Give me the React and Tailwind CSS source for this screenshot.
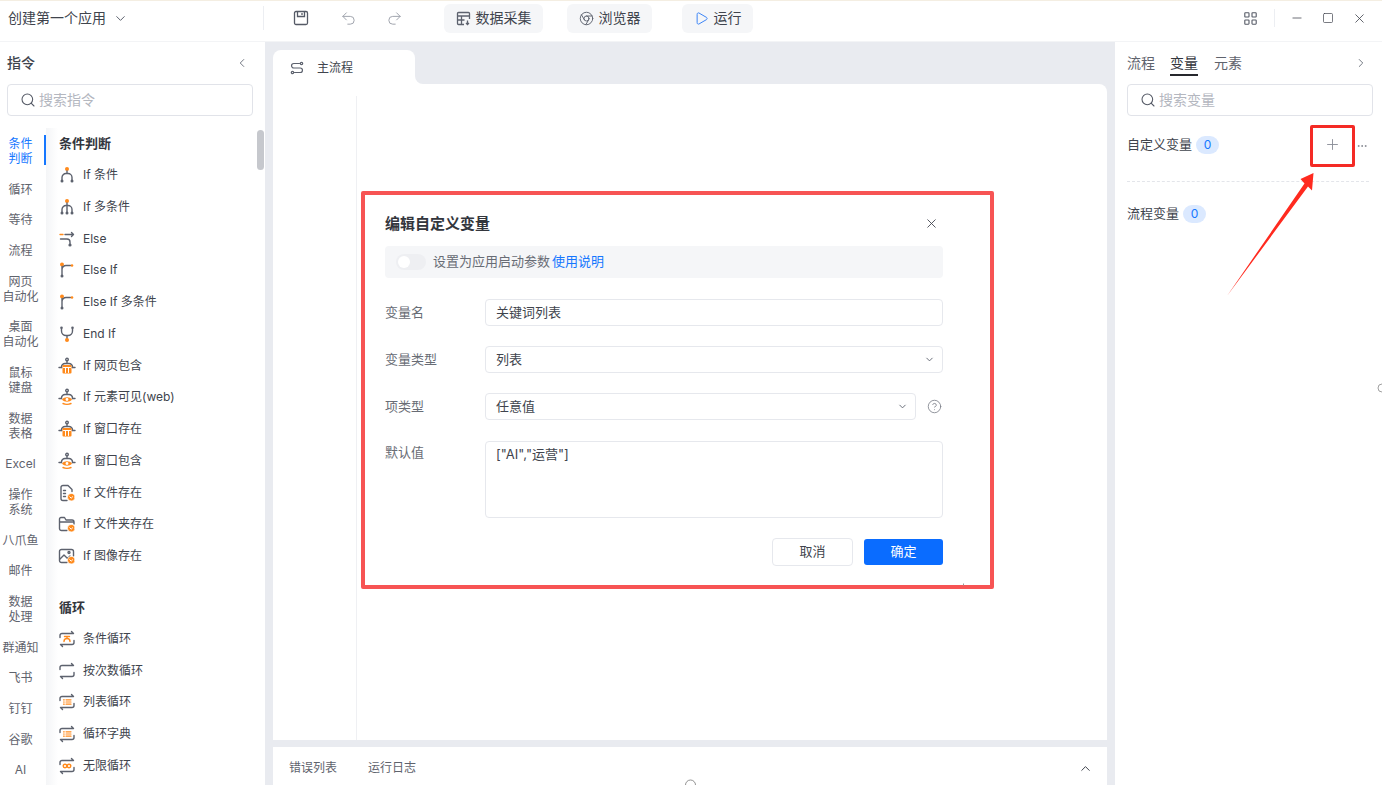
import React from "react";
import { ChevronDown, ChevronLeft, ChevronRight, ChevronUp, Search, Plus, Minus, Square, X, Undo2, Redo2, Play, Chrome, Ellipsis, CircleHelp } from "lucide-react";

const G = "#5d626e";
const O = "#ff8a1c";

const rail = [
  ["条件", "判断"], ["循环"], ["等待"], ["流程"], ["网页", "自动化"], ["桌面", "自动化"], ["鼠标", "键盘"], ["数据", "表格"], ["Excel"],
  ["操作", "系统"], ["八爪鱼"], ["邮件"], ["数据", "处理"], ["群通知"], ["飞书"], ["钉钉"], ["谷歌"], ["AI"],
];

function Ic({ children }) {
  return (
    <svg width="18" height="18" viewBox="0 0 18 18" fill="none" stroke={G} strokeWidth="1.4" strokeLinecap="round" strokeLinejoin="round" className="shrink-0">
      {children}
    </svg>
  );
}
const Dot = ({ x, y, r = 1.2, c = G }) => <circle cx={x} cy={y} r={r} fill={c} stroke="none" />;
const Robot = ({ children }) => (
  <>
    <circle cx="9" cy="2.6" r="1.3" />
    <path d="M9 4v1.5M3.5 10.5V10A3.5 3.5 0 0 1 7 6.5h4a3.5 3.5 0 0 1 3.5 3.5v.5" />
    <path d="M1 10.5h2.5M14.5 10.5H17" />
    {children}
  </>
);
const Win = () => (
  <Robot>
    <rect x="4.5" y="8" width="9" height="8.5" rx="1" fill={O} stroke="none" />
    <path d="M5.5 10.5h7M7.5 10.5v5M10.5 10.5v5" stroke="#fff" strokeWidth="1" />
  </Robot>
);
const Eye = () => (
  <Robot>
    <path d="M4 11.5c2-3 8-3 10 0-2 3-8 3-10 0z" fill={O} stroke="none" />
    <circle cx="9" cy="11.5" r="1.4" fill="#fff" stroke="none" />
    <path d="M5 15.5c2 1 6 1 8 0" stroke={O} />
  </Robot>
);
const Badge = () => (
  <>
    <circle cx="13.2" cy="13.2" r="3.8" fill={O} stroke="#fff" strokeWidth="0.8" />
    <path d="M11.8 12.8l1.4 1.4 1.4-1.4" stroke="#fff" strokeWidth="1" />
  </>
);
const Cycle = ({ children }) => (
  <>
    <path d="M2 7.5V5.5a2 2 0 0 1 2-2h11.5L13.5 1.5" />
    <path d="M16 10.5v2a2 2 0 0 1-2 2H2.5l2 2" />
    {children}
  </>
);
const ListMark = () => (
  <path d="M5.5 6.8h.8M8 6.8h5M5.5 9h.8M8 9h5M5.5 11.2h.8M8 11.2h5" stroke={O} strokeWidth="1.2" />
);

const icons = {
  ifa: (
    <Ic>
      <Dot x={9} y={3} r={2} c={O} />
      <path d="M9 5v2.5M4 14v-2.5A4 4 0 0 1 8 7.5h2a4 4 0 0 1 4 4V14" />
      <Dot x={4} y={15} r={1.5} />
      <Dot x={14} y={15} r={1.5} />
    </Ic>
  ),
  ifm: (
    <Ic>
      <Dot x={9} y={3} r={2} c={O} />
      <path d="M9 5v9M4 14v-2.5A4 4 0 0 1 8 7.5h2a4 4 0 0 1 4 4V14" />
      <Dot x={4} y={15} r={1.5} />
      <Dot x={9} y={15} r={1.5} />
      <Dot x={14} y={15} r={1.5} />
    </Ic>
  ),
  els: (
    <Ic>
      <path d="M2 4.5h3" stroke={O} />
      <path d="M7 4.5h8.5M13.5 2.5l2 2-2 2M2.5 9h6.5a3 3 0 0 1 3 3v2" />
      <Dot x={12} y={15} r={1.6} />
    </Ic>
  ),
  elf: (
    <Ic>
      <Dot x={4} y={3.5} r={2} c={O} />
      <path d="M4 5.5v8.5M4 8.5a4 4 0 0 1 4-4h4.5" />
      <Dot x={14} y={4.5} r={1.3} c={O} />
      <Dot x={4} y={15} r={1.5} />
    </Ic>
  ),
  end: (
    <Ic>
      <path d="M3.5 3.5V6a4.5 4.5 0 0 0 4.5 4.5h2A4.5 4.5 0 0 0 14.5 6V3.5M9 10.5v3" />
      <Dot x={3.5} y={2.8} r={1.3} />
      <Dot x={14.5} y={2.8} r={1.3} />
      <Dot x={9} y={15} r={2} c={O} />
    </Ic>
  ),
  win: <Ic><Win /></Ic>,
  eye: <Ic><Eye /></Ic>,
  file: (
    <Ic>
      <path d="M9 16.5H5a2 2 0 0 1-2-2v-11a2 2 0 0 1 2-2h5l4 4v2" />
      <path d="M5.5 6.5h2M5.5 9.5h2M5.5 12.5h2" />
      <Badge />
    </Ic>
  ),
  folder: (
    <Ic>
      <path d="M9 15.5H3.5a2 2 0 0 1-2-2V4a1.5 1.5 0 0 1 1.5-1.5h3.5L8 5h6a2 2 0 0 1 2 2v2M1.5 7H16" />
      <Badge />
    </Ic>
  ),
  image: (
    <Ic>
      <path d="M9 15.5H3.5a2 2 0 0 1-2-2v-9a2 2 0 0 1 2-2h10a2 2 0 0 1 2 2V9" />
      <path d="M2 12l4-4 3.5 3.5L12 9" />
      <circle cx="11" cy="5.5" r="1" />
      <Badge />
    </Ic>
  ),
  lc: <Ic><Cycle><path d="M6.5 6.5h5M9 6.5v1.5M6 11.5c0-2 1.5-3 3-3s3 1 3 3" stroke={O} /></Cycle></Ic>,
  ln: <Ic><Cycle /></Ic>,
  ll: <Ic><Cycle><ListMark /></Cycle></Ic>,
  li: (
    <Ic>
      <Cycle>
        <circle cx="7" cy="9" r="1.8" stroke={O} strokeWidth="1.4" />
        <circle cx="11" cy="9" r="1.8" stroke={O} strokeWidth="1.4" />
      </Cycle>
    </Ic>
  ),
};

const conds = [
  ["ifa", "If 条件"], ["ifm", "If 多条件"], ["els", "Else"], ["elf", "Else If"], ["elf", "Else If 多条件"], ["end", "End If"],
  ["win", "If 网页包含"], ["eye", "If 元素可见(web)"], ["win", "If 窗口存在"], ["eye", "If 窗口包含"],
  ["file", "If 文件存在"], ["folder", "If 文件夹存在"], ["image", "If 图像存在"],
];
const loops = [["lc", "条件循环"], ["ln", "按次数循环"], ["ll", "列表循环"], ["ll", "循环字典"], ["li", "无限循环"]];

function Row({ icon, text }) {
  return (
    <div className="flex h-[31.75px] items-center gap-[7px] pl-[12px] text-[12px] text-[#40444d]">
      {icons[icon]}
      <span>{text}</span>
    </div>
  );
}

function SearchBox({ text }) {
  return (
    <div className="flex h-[32px] items-center gap-[3px] rounded-[4px] border border-[#e1e3e9] bg-white pl-[12px]">
      <Search size={16} strokeWidth={1.6} color="#555a66" />
      <span className="-mt-[2px] text-[14px] text-[#b4b7bf]">{text}</span>
    </div>
  );
}

function TopBtn({ className, icon, text }) {
  return (
    <div className={`flex h-[29px] items-center justify-center gap-[5px] rounded-[6px] bg-[#f5f6f8] text-[14px] text-[#40444d] ${className}`}>
      {icon}
      <span className="-mt-[1px]">{text}</span>
    </div>
  );
}

function Field({ label, children, top }) {
  return (
    <div className="flex">
      <div className={`-mt-[1px] w-[100px] shrink-0 text-[13px] leading-[18px] text-[#686c75] ${top ? "pt-[3px]" : "self-center"}`}>{label}</div>
      {children}
    </div>
  );
}

function Input({ text, chevron, className }) {
  return (
    <div className={`flex h-[27px] items-center justify-between rounded-[4px] border border-[#e6e8ed] bg-white pl-[10px] pr-[7px] text-[13px] text-[#40444d] ${className}`}>
      <span>{text}</span>
      {chevron && <ChevronDown size={11} strokeWidth={2} color="#5d626e" />}
    </div>
  );
}

export default function App() {
  return (
    <div className="relative flex h-[785px] w-[1382px] flex-col overflow-hidden bg-white font-['Inter','Noto_Sans_CJK_SC',sans-serif]">
      {/* Top bar */}
      <div className="h-px shrink-0 bg-[#f4eee2]" />
      <div className="flex h-[41px] shrink-0 items-center border-b border-[#f3f4f6] pb-[6px]">
        <div className="flex h-[24px] w-[264px] items-center border-r border-[#eceef2] pl-[8px]">
          <span className="-mt-[2px] text-[14px] text-[#40444d]">创建第一个应用</span>
          <ChevronDown size={15} strokeWidth={1.6} color="#5d626e" className="ml-[7px]" />
        </div>
        <svg width="16" height="16" viewBox="0 0 16 16" fill="none" stroke="#555a66" strokeWidth="1.3" className="ml-[29px]">
          <rect x="1.5" y="1.5" width="13" height="13" rx="1.5" />
          <path d="M4.5 1.5v5h7v-5M9 3v2" />
        </svg>
        <Undo2 size={17} strokeWidth={1.4} color="#a0a4ad" className="ml-[31px]" />
        <Redo2 size={17} strokeWidth={1.4} color="#a0a4ad" className="ml-[29px]" />
        <TopBtn
          className="ml-[41px] w-[99px]"
          icon={
            <svg width="15" height="15" viewBox="0 0 15 15" fill="none" stroke="#5d626e" strokeWidth="1.3">
              <path d="M8 13.5H2.5a1 1 0 0 1-1-1v-10a1 1 0 0 1 1-1h10a1 1 0 0 1 1 1V8M1.5 5h12M1.5 9h7M5.5 5v8.5M11.5 9.5v4M10 12l1.5 1.5L13 12" />
            </svg>
          }
          text="数据采集"
        />
        <TopBtn className="ml-[24px] w-[85px]" icon={<Chrome size={15} strokeWidth={1.5} color="#5d626e" />} text="浏览器" />
        <TopBtn className="ml-[30px] w-[71px]" icon={<Play size={15} strokeWidth={1.5} color="#2f7df6" />} text="运行" />
        <div className="ml-auto flex items-center">
          <svg width="13" height="13" viewBox="0 0 13 13" fill="none" stroke="#555a66" strokeWidth="1.1">
            <rect x="0.8" y="0.8" width="4.2" height="4.2" rx="0.6" />
            <rect x="8" y="0.8" width="4.2" height="4.2" rx="0.6" />
            <rect x="0.8" y="8" width="4.2" height="4.2" rx="0.6" />
            <rect x="8" y="8" width="4.2" height="4.2" rx="0.6" />
          </svg>
          <div className="ml-[17px] h-[18px] w-px bg-[#eceef2]" />
          <Minus size={14} strokeWidth={1.3} color="#40444d" className="ml-[15px]" />
          <Square size={12} strokeWidth={1.4} color="#40444d" className="ml-[18px]" />
          <X size={15} strokeWidth={1.3} color="#40444d" className="ml-[18px] mr-[15px]" />
        </div>
      </div>

      <div className="flex min-h-0 flex-1">
        {/* Left panel */}
        <aside className="relative flex w-[265px] shrink-0 flex-col">
          <div className="flex h-[42px] items-center justify-between pl-[7px] pr-[16px]">
            <span className="-mt-[2px] text-[14px] font-medium text-[#40444d]">指令</span>
            <ChevronLeft size={14} strokeWidth={1.6} color="#6b707b" />
          </div>
          <div className="ml-[7px] w-[246px]">
            <SearchBox text="搜索指令" />
          </div>
          <div className="mt-[12px] flex min-h-0 flex-1">
            <div className="flex w-[46px] shrink-0 flex-col gap-[15.66px] pt-[8px] text-center text-[12px] leading-[15px] text-[#5f636d]">
              {rail.map((r, i) => (
                <div key={i} className={i === 0 ? "relative text-[#1677ff]" : ""}>
                  {r.map((l) => (
                    <div key={l} className="-ml-[6px] -mr-[1px] whitespace-nowrap">{l}</div>
                  ))}
                  {i === 0 && <div className="absolute right-0 -top-[1px] h-[30px] w-[2px] bg-[#1677ff]" />}
                </div>
              ))}
            </div>
            <div className="relative min-w-0 flex-1 bg-gradient-to-r from-[#f4f5f7] to-white to-[12px]">
              <div className="flex h-[31.3px] items-center pl-[13px] text-[13px] font-semibold text-[#33363d]">条件判断</div>
              {conds.map(([ic, t]) => (
                <Row key={t} icon={ic} text={t} />
              ))}
              <div className="mt-[20px] flex h-[31px] items-center pl-[13px] text-[13px] font-semibold text-[#33363d]">循环</div>
              {loops.map(([ic, t]) => (
                <Row key={t} icon={ic} text={t} />
              ))}
              <div className="absolute right-[1px] top-[2px] h-[40px] w-[7px] rounded-full bg-[#c6c8cd]" />
            </div>
          </div>
        </aside>

        {/* Canvas */}
        <main className="flex min-w-0 flex-1 flex-col bg-[#e9ebf0] px-[8px] pt-[8px]">
          <div className="flex h-[34px] shrink-0">
            <div className="flex w-[142px] items-center gap-[13px] rounded-t-[8px] bg-white pl-[17px] pt-[1px] text-[12px] text-[#40444d]">
              <svg width="14" height="14" viewBox="0 0 14 14" fill="none" stroke="#5d626e" strokeWidth="1.2" strokeLinecap="round">
                <path d="M9.5 2.5H3.8a2 2 0 0 0 0 4.5h6.4a2 2 0 0 1 0 4.5H4.5" />
                <circle cx="11.5" cy="2.5" r="1.2" />
                <circle cx="2.5" cy="11.5" r="1.2" />
              </svg>
              <span>主流程</span>
            </div>
            <div className="h-[8px] w-[8px] self-end bg-white">
              <div className="h-full w-full rounded-bl-[8px] bg-[#e9ebf0]" />
            </div>
          </div>
          <div className="relative flex min-h-0 flex-1 rounded-tr-[8px] bg-white pt-[12px]">
            <div className="ml-[83px] w-px bg-[#eff0f3]" />
            {/* Dialog */}
            <div className="absolute left-[88px] top-[107px] flex h-[398px] w-[633px] flex-col rounded-[2px] border-4 border-[#f75454] bg-white pl-[20px] pr-[47px]">
              <div className="flex h-[51px] shrink-0 items-start justify-between pt-[18px]">
                <span className="text-[15px] font-semibold leading-[22px] text-[#33363d]">编辑自定义变量</span>
                <X size={15} strokeWidth={1.4} color="#40444d" className="mr-[4px] mt-[3px]" />
              </div>
              <div className="flex h-[32px] shrink-0 items-center rounded-[4px] bg-[#f5f6f8] pl-[11px] text-[13px] text-[#686c75]">
                <div className="flex h-[16px] w-[30px] items-center rounded-full bg-[#eeeff2] pl-[2px]">
                  <div className="h-[12px] w-[12px] rounded-full bg-white" />
                </div>
                <span className="ml-[7px]">设置为应用启动参数</span>
                <span className="ml-[2px] text-[#1677ff]">使用说明</span>
              </div>
              <div className="mt-[21px] flex flex-col gap-[20.2px]">
                <Field label="变量名"><Input text="关键词列表" className="flex-1" /></Field>
                <Field label="变量类型"><Input text="列表" chevron className="flex-1" /></Field>
                <Field label="项类型">
                  <Input text="任意值" chevron className="flex-1" />
                  <CircleHelp size={15} strokeWidth={1.3} color="#7a7e87" className="ml-[11px] mr-px self-center" />
                </Field>
                <Field label="默认值" top>
                  <div className="h-[77px] flex-1 rounded-[4px] border border-[#e6e8ed] bg-white px-[10px] pt-[3px] text-[13px] leading-[18px] text-[#40444d]">
                    ["AI","运营"]
                  </div>
                </Field>
              </div>
              <div className="mt-[20px] flex items-center justify-end gap-[11px]">
                <div className="flex h-[28px] w-[81px] items-center justify-center rounded-[4px] border border-[#e6e8ed] text-[13px] text-[#40444d]">取消</div>
                <div className="flex h-[26px] w-[79px] items-center justify-center rounded-[3px] bg-[#0a6cff] text-[13px] text-white">确定</div>
              </div>
            </div>
          </div>
          <div className="mt-[7px] flex h-[38px] shrink-0 items-center gap-[31px] bg-white pl-[16px] pr-[14px] pt-[4px] text-[12px] text-[#5f636d]">
            <span>错误列表</span>
            <span>运行日志</span>
            <ChevronUp size={15} strokeWidth={1.6} color="#40444d" className="ml-auto" />
          </div>
        </main>

        {/* Right panel */}
        <aside className="flex w-[267px] shrink-0 flex-col pl-[12px] pr-[9px]">
          <div className="flex h-[42px] items-center text-[14px] text-[#5f636d]">
            <span className="-mt-[2px]">流程</span>
            <span className="relative ml-[15px] -mt-[2px] text-[#33363d]">
              变量
              <span className="absolute inset-x-0 top-[22px] h-[2px] bg-[#26282d]" />
            </span>
            <span className="ml-[16px] -mt-[2px]">元素</span>
            <ChevronRight size={14} strokeWidth={1.6} color="#6b707b" className="ml-auto mr-[5px]" />
          </div>
          <SearchBox text="搜索变量" />
          <div className="mt-[9px] flex h-[42px] items-center text-[13px] text-[#40444d]">
            <span className="-mt-[3px]">自定义变量</span>
            <span className="ml-[4px] -mt-[3px] flex h-[18px] w-[23px] items-center justify-center rounded-full bg-[#dbe9ff] text-[12px] text-[#1677ff]">0</span>
            <div className="ml-auto flex h-[42px] w-[45px] items-center justify-center rounded-[2px] border-[3px] border-[#f42a25]">
              <Plus size={17} strokeWidth={1.3} color="#8a8e97" className="-mt-[3px]" />
            </div>
            <Ellipsis size={12} strokeWidth={1.6} color="#7a7e87" className="ml-[1px] mr-[5px] -mt-[1px]" />
          </div>
          <div className="mr-[4px] mt-[14px] border-t border-dashed border-[#e3e5ea]" />
          <div className="mt-[23px] flex h-[18px] items-center text-[13px] text-[#40444d]">
            <span>流程变量</span>
            <span className="ml-[4px] flex h-[18px] w-[23px] items-center justify-center rounded-full bg-[#dbe9ff] text-[12px] text-[#1677ff]">0</span>
          </div>
        </aside>
      </div>

      {/* Annotation arrow */}
      <svg width="1382" height="785" viewBox="0 0 1382 785" className="pointer-events-none absolute left-0 top-0">
        <polygon points="1227,296 1304.5,183.5 1300.5,179 1313.5,173 1312,190.5 1308,186.5" fill="#ff2a1f" />
        <circle cx="690.5" cy="785" r="5" fill="none" stroke="#777" strokeWidth="0.8" />
        <path d="M1382 384a4 4 0 0 0 0 8" fill="none" stroke="#888" strokeWidth="0.8" />
        <path d="M963.5 583.5v2" stroke="#999" strokeWidth="1" />
      </svg>
    </div>
  );
}
